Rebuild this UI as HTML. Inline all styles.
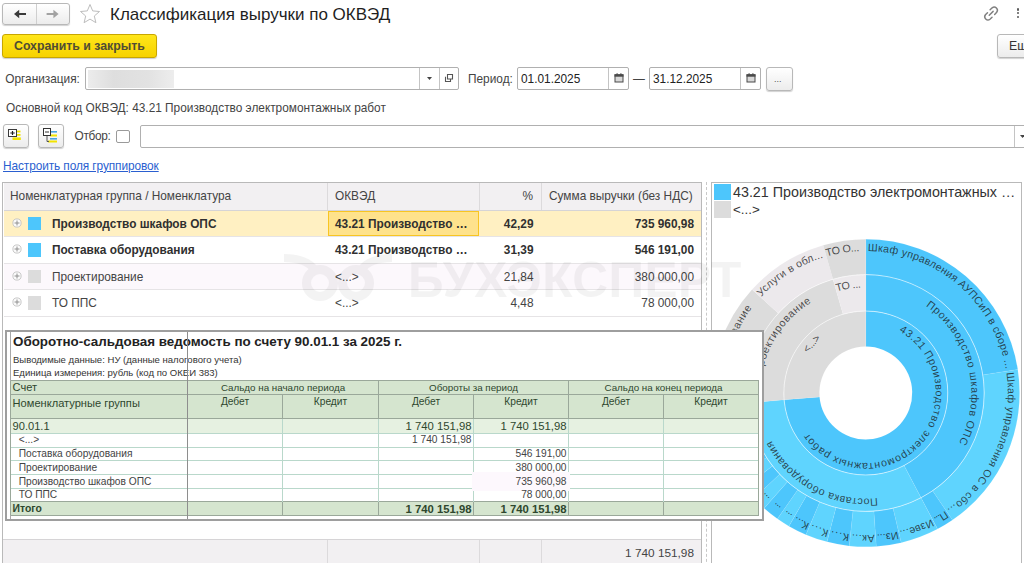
<!DOCTYPE html>
<html lang="ru"><head><meta charset="utf-8"><title>Классификация выручки по ОКВЭД</title>
<style>
html,body{margin:0;padding:0;background:#fff;}
body{width:1024px;height:563px;position:relative;overflow:hidden;font-family:"Liberation Sans",sans-serif;font-size:11.85px;color:#444;}
.a{position:absolute;white-space:nowrap;line-height:1;}
.box{position:absolute;box-sizing:border-box;}
.btn{border:1px solid #b8b8b8;border-radius:3px;background:linear-gradient(#ffffff,#ececec);box-shadow:0 1px 1px rgba(0,0,0,.18);}
.inp{border:1px solid #b0b0b0;border-radius:2px;background:#fff;}
.vl{position:absolute;width:1px;background:#c4c4c4;}
.hl{position:absolute;height:1px;background:#e6e4e6;}
.b{font-weight:bold;color:#303030;}
.r{text-align:right;}
/* overlay */
.ov{position:absolute;left:5px;top:330px;width:759px;height:190px;box-sizing:border-box;border:2px solid #9c9c9c;background:#fff;box-shadow:0 0 0 1px #d0d0d0;}
.g{position:absolute;box-sizing:border-box;}
.osv{color:#2e472e;}
</style></head><body>

<!-- top nav -->
<div class="box btn" style="left:2px;top:3px;width:68px;height:22px;"></div>
<div class="vl" style="left:36px;top:4px;height:20px;background:#cfcfcf"></div>
<svg class="a" style="left:8px;top:7px" width="56" height="14" viewBox="0 0 56 14">
 <path d="M6 7l5.2-4.3v3.2H18v2.2h-6.8v3.2z" fill="#3a3a3a"/>
 <path d="M50.6 7l-5.2-4.3v3.2H38.6v2.2h6.8v3.2z" fill="#a2a2a2"/>
</svg>
<svg class="a" style="left:79px;top:3px" width="22" height="21" viewBox="0 0 22 21"><path d="M11 1.5l2.7 6.4 6.8.6-5.2 4.5 1.6 6.7L11 16.1l-5.9 3.6 1.6-6.7L1.5 8.5l6.8-.6z" fill="#fff" stroke="#bdbdbd" stroke-width="1"/></svg>
<div class="a" style="left:110px;top:5.6px;font-size:17px;color:#1f1f1f;">Классификация выручки по ОКВЭД</div>

<!-- link + dots -->
<svg class="a" style="left:980.6px;top:3.6px" width="19.5" height="19.5" viewBox="0 0 18 18"><g fill="none" stroke="#808080" stroke-width="1.35" stroke-linecap="round"><path d="M7.6 10.4l3.6-3.6"/><path d="M8.4 5.4l1.9-1.9a3 3 0 0 1 4.2 4.2l-1.9 1.9"/><path d="M10.2 12.2l-1.9 1.9a3 3 0 0 1-4.2-4.2L6 8"/></g></svg>
<div class="box" style="left:1016.8px;top:8.3px;width:2.3px;height:2.3px;border-radius:1px;background:#5a5a5a"></div>
<div class="box" style="left:1016.8px;top:12.1px;width:2.3px;height:2.3px;border-radius:1px;background:#5a5a5a"></div>
<div class="box" style="left:1016.8px;top:15.9px;width:2.3px;height:2.3px;border-radius:1px;background:#5a5a5a"></div>

<!-- yellow button -->
<div class="box" style="left:2px;top:34px;width:155px;height:24px;border:1px solid #c8a600;border-radius:3px;background:linear-gradient(#ffe61a,#f7d200);box-shadow:0 1px 1px rgba(0,0,0,.2);"></div>
<div class="a b" style="left:14px;top:40px;font-size:12.3px;color:#504c34;">Сохранить и закрыть</div>
<div class="box btn" style="left:997px;top:34px;width:40px;height:24px;"></div>
<div class="a" style="left:1009px;top:40px;font-size:12.3px;color:#333;">Еще</div>

<!-- org row -->
<div class="a" style="left:5.2px;top:73.8px;">Организация:</div>
<div class="box inp" style="left:84.5px;top:67px;width:374.5px;height:22.6px;"></div>
<div class="box" style="left:87.5px;top:70.2px;width:86px;height:17.5px;background:linear-gradient(90deg,#ececec,#dedede 30%,#e2e2e2 70%,#ededed);"></div>
<div class="vl" style="left:419px;top:68px;height:20.6px;"></div>
<div class="vl" style="left:439px;top:68px;height:20.6px;"></div>
<svg class="a" style="left:426.5px;top:76.5px" width="6" height="4"><path d="M0 0h5L2.5 3z" fill="#444"/></svg>
<svg class="a" style="left:443.5px;top:73px" width="10" height="10" viewBox="0 0 10 10"><path d="M3.5 1.5h5v4.5h-5zM1.5 3.8v4.7h5V6" fill="none" stroke="#555" stroke-width="1.1"/></svg>
<div class="a" style="left:468px;top:73.8px;">Период:</div>
<div class="box inp" style="left:517px;top:67px;width:112px;height:22.6px;"></div>
<div class="vl" style="left:608px;top:68px;height:20.6px;"></div>
<div class="a" style="left:521px;top:73.8px;color:#222;">01.01.2025</div>
<svg class="a cal" style="left:613.5px;top:73px" width="10" height="10" viewBox="0 0 10 10"><rect x="1" y="1.8" width="8" height="7.2" fill="#d8d8d8" stroke="#4a4a4a" stroke-width="1"/><rect x="0.5" y="1.3" width="9" height="2.4" fill="#4a4a4a"/><rect x="2.5" y="0.3" width="1.2" height="1.5" fill="#4a4a4a"/><rect x="6.3" y="0.3" width="1.2" height="1.5" fill="#4a4a4a"/></svg>
<div class="a" style="left:633px;top:73.8px;">—</div>
<div class="box inp" style="left:649px;top:67px;width:112px;height:22.6px;"></div>
<div class="vl" style="left:740px;top:68px;height:20.6px;"></div>
<div class="a" style="left:653px;top:73.8px;color:#222;">31.12.2025</div>
<svg class="a cal" style="left:745.5px;top:73px" width="10" height="10" viewBox="0 0 10 10"><rect x="1" y="1.8" width="8" height="7.2" fill="#d8d8d8" stroke="#4a4a4a" stroke-width="1"/><rect x="0.5" y="1.3" width="9" height="2.4" fill="#4a4a4a"/><rect x="2.5" y="0.3" width="1.2" height="1.5" fill="#4a4a4a"/><rect x="6.3" y="0.3" width="1.2" height="1.5" fill="#4a4a4a"/></svg>
<div class="box btn" style="left:766px;top:66.5px;width:27px;height:24.3px;"></div>
<div class="a" style="left:774px;top:75px;font-size:9px;color:#555;">...</div>

<div class="a" style="left:6px;top:103px;">Основной код ОКВЭД: 43.21 Производство электромонтажных работ</div>

<!-- toolbar -->
<div class="box btn" style="left:2.5px;top:124px;width:26.5px;height:24px;"></div>
<svg class="a" style="left:8px;top:129px" width="14" height="13" viewBox="0 0 14 13"><rect x="4.5" y="1.6" width="8" height="1.8" fill="#f2e400"/><rect x="4.5" y="5" width="8" height="1.8" fill="#f2e400"/><rect x="4.5" y="8.4" width="8.3" height="2.6" fill="#f2e400"/><rect x="0.5" y="0.5" width="8" height="7" fill="#fff" stroke="#3a3a3a" stroke-width="1"/><path d="M2.3 4h4.4M4.5 2v4" stroke="#222" stroke-width="1.2"/></svg>
<div class="box btn" style="left:37.8px;top:124px;width:26.6px;height:24px;"></div>
<svg class="a" style="left:43px;top:128px" width="16" height="16" viewBox="0 0 16 16"><rect x="7" y="3" width="7" height="1.6" fill="#4aa3e0"/><rect x="7" y="6.5" width="7" height="2" fill="#f2e400"/><rect x="7" y="10" width="7" height="1.6" fill="#4aa3e0"/><rect x="5" y="12.5" width="9" height="2" fill="#f2e400"/><rect x="0.5" y="0.5" width="7" height="7" fill="#fff" stroke="#333" stroke-width="1"/><path d="M2 4h4" stroke="#333" stroke-width="1"/><path d="M4 8v5.5h2" stroke="#555" stroke-width="1" fill="none"/></svg>
<div class="a" style="left:74.5px;top:131px;letter-spacing:-0.3px;">Отбор:</div>
<div class="box" style="left:116.4px;top:130px;width:13.4px;height:13.4px;border:1px solid #9a9a9a;border-radius:2px;background:#fff;"></div>
<div class="box inp" style="left:140px;top:125px;width:900px;height:23px;"></div>
<div class="vl" style="left:1014px;top:126px;height:21px;"></div>
<svg class="a" style="left:1019.5px;top:134.5px" width="6" height="4"><path d="M0 0h5L2.5 3z" fill="#444"/></svg>

<div class="a" style="left:3px;top:160.8px;color:#2a5fd0;letter-spacing:-0.08px;text-decoration:underline;">Настроить поля группировок</div>

<!-- main table -->
<div class="box" style="left:2px;top:182px;width:700px;height:400px;border:1px solid #b9b9b9;background:#fff;"></div>
<div class="box" style="left:3.5px;top:183px;width:697.5px;height:27.5px;background:#f2f0f2;"></div>
<div class="box" style="left:3.5px;top:210.6px;width:697.5px;height:25.6px;background:#fff0c2;"></div>
<div class="box" style="left:4px;top:263px;width:697px;height:26px;background:#fcf8fc;"></div>
<div class="hl" style="left:3.5px;top:209.7px;width:697.5px;background:#d6d4d6"></div>
<div class="hl" style="left:4px;top:236px;width:697px;"></div>
<div class="hl" style="left:4px;top:263px;width:697px;"></div>
<div class="hl" style="left:4px;top:289px;width:697px;"></div>
<div class="hl" style="left:4px;top:316px;width:697px;"></div>
<div class="vl" style="left:327px;top:183px;height:27px;background:#dcdadc"></div>
<div class="vl" style="left:479px;top:183px;height:27px;background:#dcdadc"></div>
<div class="vl" style="left:541px;top:183px;height:27px;background:#dcdadc"></div>
<div class="a" style="left:10px;top:190.8px;">Номенклатурная группа / Номенклатура</div>
<div class="a" style="left:335px;top:190.8px;">ОКВЭД</div>
<div class="a r" style="left:490px;top:190.8px;width:43px;">%</div>
<div class="a" style="left:549px;top:190.8px;">Сумма выручки (без НДС)</div>

<!-- rows -->
<div class="box" style="left:328px;top:211.2px;width:150.6px;height:24.4px;border:1.5px solid #f8c522;background:#fee28c;"></div>
<svg class="a" style="left:12px;top:218px" width="10" height="10" viewBox="0 0 10 10"><circle cx="5" cy="5" r="4.1" fill="#fbfbfb" stroke="#c2c2c2" stroke-width="0.9"/><path d="M2.5 5h5M5 2.5v5" stroke="#909090" stroke-width="1"/></svg>
<div class="box" style="left:28px;top:216.5px;width:13.4px;height:13.7px;background:#4dc6fc;"></div>
<div class="a b" style="left:52px;top:218.8px;">Производство шкафов ОПС</div>
<div class="a b" style="left:335px;top:218.8px;">43.21 Производство …</div>
<div class="a b r" style="left:480px;top:218.8px;width:53.5px;">42,29</div>
<div class="a b r" style="left:560px;top:218.8px;width:134px;">735 960,98</div>
<svg class="a" style="left:12px;top:244px" width="10" height="10" viewBox="0 0 10 10"><circle cx="5" cy="5" r="4.1" fill="#fbfbfb" stroke="#c2c2c2" stroke-width="0.9"/><path d="M2.5 5h5M5 2.5v5" stroke="#909090" stroke-width="1"/></svg>
<div class="box" style="left:28px;top:243.0px;width:13.4px;height:13.7px;background:#4dc6fc;"></div>
<div class="a b" style="left:52px;top:245.3px;">Поставка оборудования</div>
<div class="a b" style="left:335px;top:245.3px;">43.21 Производство …</div>
<div class="a b r" style="left:480px;top:245.3px;width:53.5px;">31,39</div>
<div class="a b r" style="left:560px;top:245.3px;width:134px;">546 191,00</div>
<svg class="a" style="left:12px;top:271px" width="10" height="10" viewBox="0 0 10 10"><circle cx="5" cy="5" r="4.1" fill="#fbfbfb" stroke="#c2c2c2" stroke-width="0.9"/><path d="M2.5 5h5M5 2.5v5" stroke="#909090" stroke-width="1"/></svg>
<div class="box" style="left:28px;top:269.5px;width:13.4px;height:13.7px;background:#dcdcdc;"></div>
<div class="a" style="left:52px;top:271.8px;">Проектирование</div>
<div class="a" style="left:335px;top:271.8px;">&lt;...&gt;</div>
<div class="a r" style="left:480px;top:271.8px;width:53.5px;">21,84</div>
<div class="a r" style="left:560px;top:271.8px;width:134px;">380 000,00</div>
<svg class="a" style="left:12px;top:297px" width="10" height="10" viewBox="0 0 10 10"><circle cx="5" cy="5" r="4.1" fill="#fbfbfb" stroke="#c2c2c2" stroke-width="0.9"/><path d="M2.5 5h5M5 2.5v5" stroke="#909090" stroke-width="1"/></svg>
<div class="box" style="left:28px;top:296.0px;width:13.4px;height:13.7px;background:#dcdcdc;"></div>
<div class="a" style="left:52px;top:298.3px;">ТО ППС</div>
<div class="a" style="left:335px;top:298.3px;">&lt;...&gt;</div>
<div class="a r" style="left:480px;top:298.3px;width:53.5px;">4,48</div>
<div class="a r" style="left:560px;top:298.3px;width:134px;">78 000,00</div>

<!-- footer -->
<div class="box" style="left:3px;top:539px;width:698px;height:30px;background:#f2f0f2;border-top:1px solid #d6d4d6;"></div>
<div class="vl" style="left:327px;top:540px;height:30px;background:#dcdadc"></div>
<div class="vl" style="left:479px;top:540px;height:30px;background:#dcdadc"></div>
<div class="vl" style="left:541px;top:540px;height:30px;background:#dcdadc"></div>
<div class="a r" style="left:560px;top:547.5px;width:134px;font-size:11.8px;">1 740 151,98</div>

<!-- splitter + chart panel -->
<div class="box" style="left:706px;top:182px;width:0;height:400px;border-left:1px dashed #c8c8c8;"></div>
<div class="box" style="left:711px;top:181.5px;width:310.5px;height:400px;border:1px solid #b9b9b9;background:#fff;"></div>
<div class="box" style="left:714px;top:184px;width:17px;height:16px;background:#4dc6fc;"></div>
<div class="box" style="left:714px;top:201px;width:17px;height:17px;background:#dcdcdc;"></div>
<div class="a" style="left:733px;top:185px;font-size:14.3px;color:#333;">43.21 Производство электромонтажных …</div>
<div class="a" style="left:733px;top:202.5px;font-size:13.4px;color:#333;">&lt;...&gt;</div>
<svg class="chart" width="1024" height="563" viewBox="0 0 1024 563" style="position:absolute;left:0;top:0" font-family="Liberation Sans, sans-serif"><defs><path id="p1" d="M896.92 330.30A70.0 70.0 0 1 1 796.08 399.22"/><path id="p2" d="M806.83 355.29A70.0 70.0 0 0 1 854.01 324.00"/><path id="p3" d="M922.69 304.04A105.6 105.6 0 0 1 921.45 482.75"/><path id="p4" d="M881.23 497.47A105.6 105.6 0 0 1 760.35 387.29"/><path id="p5" d="M761.28 377.94A105.6 105.6 0 0 1 863.59 287.42"/><path id="p6" d="M833.34 292.51A105.6 105.6 0 0 1 914.40 299.25"/><path id="p7" d="M862.83 251.03A142.0 142.0 0 0 1 998.98 442.26"/><path id="p8" d="M1005.56 367.85A142.0 142.0 0 0 1 878.18 534.46"/><path id="p9" d="M949.27 507.88A142.0 142.0 0 0 1 861.84 534.94"/><path id="p10" d="M935.72 516.59A142.0 142.0 0 0 1 825.95 529.29"/><path id="p11" d="M902.55 530.16A142.0 142.0 0 0 1 804.44 521.06"/><path id="p12" d="M879.41 534.35A142.0 142.0 0 0 1 783.14 508.46"/><path id="p13" d="M854.41 534.54A142.0 142.0 0 0 1 767.16 495.15"/><path id="p14" d="M833.86 531.36A142.0 142.0 0 0 1 753.29 479.64"/><path id="p15" d="M814.22 525.30A142.0 142.0 0 0 1 743.45 465.07"/><path id="p16" d="M796.96 517.20A142.0 142.0 0 0 1 737.95 454.80"/><path id="p17" d="M785.37 510.03A142.0 142.0 0 0 1 732.62 442.26"/><path id="p18" d="M773.77 501.14A142.0 142.0 0 0 1 728.26 428.31"/><path id="p19" d="M723.83 395.97A142.0 142.0 0 0 1 809.63 262.58"/><path id="p20" d="M757.98 300.59A142.0 142.0 0 0 1 896.78 254.42"/><path id="p21" d="M822.16 257.87A142.0 142.0 0 0 1 931.15 266.93"/></defs><path d="M865.80 311.00A82.0 82.0 0 1 1 784.09 399.86L819.56 396.88A46.4 46.4 0 1 0 865.80 346.60Z" fill="#4dc6fc" stroke="rgba(255,255,255,0.12)" stroke-width="0.6"/><path d="M784.09 399.86A82.0 82.0 0 0 1 865.80 311.00L865.80 346.60A46.4 46.4 0 0 0 819.56 396.88Z" fill="#dcdcdc" stroke="rgba(255,255,255,0.12)" stroke-width="0.6"/><path d="M865.80 274.60A118.4 118.4 0 0 1 921.02 497.73L904.04 465.54A82.0 82.0 0 0 0 865.80 311.00Z" fill="#4dc6fc" stroke="rgba(255,255,255,0.12)" stroke-width="0.6"/><path d="M921.02 497.73A118.4 118.4 0 0 1 747.82 402.91L784.09 399.86A82.0 82.0 0 0 0 904.04 465.54Z" fill="#5fd4fe" stroke="rgba(255,255,255,0.12)" stroke-width="0.6"/><path d="M747.82 402.91A118.4 118.4 0 0 1 832.97 279.24L843.06 314.22A82.0 82.0 0 0 0 784.09 399.86Z" fill="#dcdcdc" stroke="rgba(255,255,255,0.12)" stroke-width="0.6"/><path d="M832.97 279.24A118.4 118.4 0 0 1 865.80 274.60L865.80 311.00A82.0 82.0 0 0 0 843.06 314.22Z" fill="#ece9ec" stroke="rgba(255,255,255,0.12)" stroke-width="0.6"/><path d="M865.80 239.20A153.8 153.8 0 0 1 1017.79 369.47L982.81 374.89A118.4 118.4 0 0 0 865.80 274.60Z" fill="#4dc6fc" stroke="rgba(255,255,255,0.12)" stroke-width="0.6"/><path d="M1017.79 369.47A153.8 153.8 0 0 1 952.47 520.05L932.52 490.81A118.4 118.4 0 0 0 982.81 374.89Z" fill="#5fd4fe" stroke="rgba(255,255,255,0.12)" stroke-width="0.6"/><path d="M952.47 520.05A153.8 153.8 0 0 1 937.53 529.05L921.02 497.73A118.4 118.4 0 0 0 932.52 490.81Z" fill="#4dc6fc" stroke="rgba(255,255,255,0.12)" stroke-width="0.6"/><path d="M937.53 529.05A153.8 153.8 0 0 1 901.18 542.67L893.04 508.22A118.4 118.4 0 0 0 921.02 497.73Z" fill="#5fd4fe" stroke="rgba(255,255,255,0.12)" stroke-width="0.6"/><path d="M901.18 542.67A153.8 153.8 0 0 1 876.26 546.44L873.85 511.13A118.4 118.4 0 0 0 893.04 508.22Z" fill="#4dc6fc" stroke="rgba(255,255,255,0.12)" stroke-width="0.6"/><path d="M876.26 546.44A153.8 153.8 0 0 1 849.19 545.90L853.01 510.71A118.4 118.4 0 0 0 873.85 511.13Z" fill="#5fd4fe" stroke="rgba(255,255,255,0.12)" stroke-width="0.6"/><path d="M849.19 545.90A153.8 153.8 0 0 1 827.03 541.83L835.95 507.58A118.4 118.4 0 0 0 853.01 510.71Z" fill="#4dc6fc" stroke="rgba(255,255,255,0.12)" stroke-width="0.6"/><path d="M827.03 541.83A153.8 153.8 0 0 1 805.95 534.68L819.73 502.07A118.4 118.4 0 0 0 835.95 507.58Z" fill="#5fd4fe" stroke="rgba(255,255,255,0.12)" stroke-width="0.6"/><path d="M805.95 534.68A153.8 153.8 0 0 1 788.90 526.19L806.60 495.54A118.4 118.4 0 0 0 819.73 502.07Z" fill="#4dc6fc" stroke="rgba(255,255,255,0.12)" stroke-width="0.6"/><path d="M788.90 526.19A153.8 153.8 0 0 1 777.36 518.83L797.72 489.87A118.4 118.4 0 0 0 806.60 495.54Z" fill="#5fd4fe" stroke="rgba(255,255,255,0.12)" stroke-width="0.6"/><path d="M777.36 518.83A153.8 153.8 0 0 1 764.09 508.37L787.50 481.81A118.4 118.4 0 0 0 797.72 489.87Z" fill="#4dc6fc" stroke="rgba(255,255,255,0.12)" stroke-width="0.6"/><path d="M764.09 508.37A153.8 153.8 0 0 1 753.87 498.48L779.63 474.20A118.4 118.4 0 0 0 787.50 481.81Z" fill="#5fd4fe" stroke="rgba(255,255,255,0.12)" stroke-width="0.6"/><path d="M753.87 498.48A153.8 153.8 0 0 1 744.60 487.69L772.50 465.89A118.4 118.4 0 0 0 779.63 474.20Z" fill="#4dc6fc" stroke="rgba(255,255,255,0.12)" stroke-width="0.6"/><path d="M744.60 487.69A153.8 153.8 0 0 1 736.81 476.77L766.50 457.49A118.4 118.4 0 0 0 772.50 465.89Z" fill="#5fd4fe" stroke="rgba(255,255,255,0.12)" stroke-width="0.6"/><path d="M736.81 476.77A153.8 153.8 0 0 1 730.00 465.20L761.26 448.59A118.4 118.4 0 0 0 766.50 457.49Z" fill="#4dc6fc" stroke="rgba(255,255,255,0.12)" stroke-width="0.6"/><path d="M730.00 465.20A153.8 153.8 0 0 1 724.23 453.09L756.81 439.26A118.4 118.4 0 0 0 761.26 448.59Z" fill="#5fd4fe" stroke="rgba(255,255,255,0.12)" stroke-width="0.6"/><path d="M724.23 453.09A153.8 153.8 0 0 1 719.53 440.53L753.19 429.59A118.4 118.4 0 0 0 756.81 439.26Z" fill="#4dc6fc" stroke="rgba(255,255,255,0.12)" stroke-width="0.6"/><path d="M719.53 440.53A153.8 153.8 0 0 1 715.94 427.60L750.43 419.63A118.4 118.4 0 0 0 753.19 429.59Z" fill="#5fd4fe" stroke="rgba(255,255,255,0.12)" stroke-width="0.6"/><path d="M715.94 427.60A153.8 153.8 0 0 1 713.89 417.06L748.86 411.52A118.4 118.4 0 0 0 750.43 419.63Z" fill="#4dc6fc" stroke="rgba(255,255,255,0.12)" stroke-width="0.6"/><path d="M713.89 417.06A153.8 153.8 0 0 1 712.54 405.87L747.82 402.91A118.4 118.4 0 0 0 748.86 411.52Z" fill="#5fd4fe" stroke="rgba(255,255,255,0.12)" stroke-width="0.6"/><path d="M712.54 405.87A153.8 153.8 0 0 1 752.04 289.49L778.23 313.32A118.4 118.4 0 0 0 747.82 402.91Z" fill="#dcdcdc" stroke="rgba(255,255,255,0.12)" stroke-width="0.6"/><path d="M752.04 289.49A153.8 153.8 0 0 1 823.15 245.23L832.97 279.24A118.4 118.4 0 0 0 778.23 313.32Z" fill="#ece9ec" stroke="rgba(255,255,255,0.12)" stroke-width="0.6"/><path d="M823.15 245.23A153.8 153.8 0 0 1 865.80 239.20L865.80 274.60A118.4 118.4 0 0 0 832.97 279.24Z" fill="#dcdcdc" stroke="rgba(255,255,255,0.12)" stroke-width="0.6"/><circle cx="865.8" cy="393.0" r="82.0" fill="none" stroke="rgba(255,255,255,0.55)" stroke-width="0.9"/><circle cx="865.8" cy="393.0" r="118.4" fill="none" stroke="rgba(255,255,255,0.55)" stroke-width="0.9"/><text font-size="10.7" letter-spacing="0.577" fill="#1a1a1a" fill-opacity="0.78"><textPath href="#p1" startOffset="2.44">43.21 Производство электромонтажных работ</textPath></text><text font-size="10.7" letter-spacing="-0.558" fill="#1a1a1a" fill-opacity="0.78"><textPath href="#p2" startOffset="2.44">&lt;...&gt;</textPath></text><text font-size="10.7" letter-spacing="0.670" fill="#1a1a1a" fill-opacity="0.78"><textPath href="#p3" startOffset="3.69">Производство шкафов ОПС</textPath></text><text font-size="10.7" letter-spacing="0.430" fill="#1a1a1a" fill-opacity="0.78"><textPath href="#p4" startOffset="3.69">Поставка оборудования</textPath></text><text font-size="10.7" letter-spacing="0.546" fill="#1a1a1a" fill-opacity="0.78"><textPath href="#p5" startOffset="3.69">Проектирование</textPath></text><text font-size="10.7" letter-spacing="-0.351" fill="#1a1a1a" fill-opacity="0.78"><textPath href="#p6" startOffset="3.69">ТО ...</textPath></text><text font-size="10.7" letter-spacing="0.238" fill="#1a1a1a" fill-opacity="0.78"><textPath href="#p7" startOffset="4.96">Шкаф управления АУПСиП в сборе ...</textPath></text><text font-size="10.7" letter-spacing="0.339" fill="#1a1a1a" fill-opacity="0.78"><textPath href="#p8" startOffset="4.96">Шкаф управления ОС в сбо...</textPath></text><text font-size="10.7" letter-spacing="-0.910" fill="#1a1a1a" fill-opacity="0.78"><textPath href="#p9" startOffset="4.96">П...</textPath></text><text font-size="10.7" letter-spacing="0.195" fill="#1a1a1a" fill-opacity="0.78"><textPath href="#p10" startOffset="4.96">Изве...</textPath></text><text font-size="10.7" letter-spacing="-0.050" fill="#1a1a1a" fill-opacity="0.78"><textPath href="#p11" startOffset="4.96">Из...</textPath></text><text font-size="10.7" letter-spacing="0.454" fill="#1a1a1a" fill-opacity="0.78"><textPath href="#p12" startOffset="4.96">Ак...</textPath></text><text font-size="10.7" letter-spacing="1.063" fill="#1a1a1a" fill-opacity="0.78"><textPath href="#p13" startOffset="4.96">К...</textPath></text><text font-size="10.7" letter-spacing="1.063" fill="#1a1a1a" fill-opacity="0.78"><textPath href="#p14" startOffset="4.96">К...</textPath></text><text font-size="10.7" letter-spacing="0.072" fill="#1a1a1a" fill-opacity="0.78"><textPath href="#p15" startOffset="4.96">К...</textPath></text><text font-size="10.7" letter-spacing="-0.494" fill="#1a1a1a" fill-opacity="0.78"><textPath href="#p16" startOffset="4.96">...</textPath></text><text font-size="10.7" letter-spacing="-0.494" fill="#1a1a1a" fill-opacity="0.78"><textPath href="#p17" startOffset="4.96">...</textPath></text><text font-size="10.7" letter-spacing="-0.494" fill="#1a1a1a" fill-opacity="0.78"><textPath href="#p18" startOffset="4.96">...</textPath></text><text font-size="10.7" letter-spacing="0.500" fill="#1a1a1a" fill-opacity="0.78"><textPath href="#p19" startOffset="4.96">Проектирование</textPath></text><text font-size="10.7" letter-spacing="0.218" fill="#1a1a1a" fill-opacity="0.78"><textPath href="#p20" startOffset="4.96">Услуги в обл...</textPath></text><text font-size="10.7" letter-spacing="-0.271" fill="#1a1a1a" fill-opacity="0.78"><textPath href="#p21" startOffset="4.96">ТО О...</textPath></text></svg>
<!-- watermark -->
<div class="a" style="left:408px;top:254.7px;font-size:49.5px;font-weight:bold;color:#000;opacity:0.045;letter-spacing:0.5px;">БУХЭКСПЕРТ</div>
<svg class="a" style="left:280px;top:250px;opacity:0.045" width="116" height="56" viewBox="0 0 116 56"><g fill="none" stroke="#000" stroke-width="9"><circle cx="40" cy="33" r="13.5"/><circle cx="76" cy="33" r="13.5"/></g><path d="M4 8c14 0 25 4 31 12" stroke="#000" stroke-width="8" fill="none"/><path d="M112 8c-14 0-25 4-31 12" stroke="#000" stroke-width="8" fill="none"/></svg>


<!-- overlay -->
<div class="box" style="left:5px;top:330px;width:759px;height:191px;background:#fff;border:2px solid #9e9e9e;"></div>
<div class="box" style="left:9.5px;top:332px;width:1px;height:187px;background:#a8a8a8;"></div>
<div class="a b" style="left:13px;top:335px;font-size:13.4px;color:#222;">Оборотно-сальдовая ведомость по счету 90.01.1 за 2025 г.</div>
<div class="a" style="left:13px;top:354.5px;font-size:9.55px;color:#333;">Выводимые данные: НУ (данные налогового учета)</div>
<div class="a" style="left:13px;top:367.5px;font-size:9.55px;color:#333;">Единица измерения: рубль (код по ОКЕИ 383)</div>
<div class="box" style="left:10.5px;top:380.5px;width:748.0px;height:38.0px;background:#d5e5cf;"></div>
<div class="box" style="left:10.5px;top:418.5px;width:748.0px;height:14.5px;background:#e6f1e1;"></div>
<div class="box" style="left:10.5px;top:501.5px;width:748.0px;height:13.8px;background:#d5e5cf;"></div>
<div class="box" style="left:10.5px;top:380.0px;width:748.0px;height:1px;background:#9aa89a;"></div>
<div class="box" style="left:10.5px;top:394.0px;width:748.0px;height:1px;background:#9aa89a;"></div>
<div class="box" style="left:10.5px;top:418.0px;width:748.0px;height:1px;background:#9aa89a;"></div>
<div class="box" style="left:10.5px;top:432.5px;width:748.0px;height:1px;background:#b9d8cb;"></div>
<div class="box" style="left:10.5px;top:446.5px;width:748.0px;height:1px;background:#b9d8cb;"></div>
<div class="box" style="left:10.5px;top:460.2px;width:748.0px;height:1px;background:#b9d8cb;"></div>
<div class="box" style="left:10.5px;top:474.0px;width:748.0px;height:1px;background:#b9d8cb;"></div>
<div class="box" style="left:10.5px;top:487.8px;width:748.0px;height:1px;background:#b9d8cb;"></div>
<div class="box" style="left:10.5px;top:501.0px;width:748.0px;height:1px;background:#9aa89a;"></div>
<div class="box" style="left:10.5px;top:514.8px;width:748.0px;height:1px;background:#9aa89a;"></div>
<div class="box" style="left:10.0px;top:380.5px;width:1px;height:134.8px;background:#9aa89a;"></div>
<div class="box" style="left:187.0px;top:380.5px;width:1px;height:38.0px;background:#9aa89a;"></div>
<div class="box" style="left:187.0px;top:418.5px;width:1px;height:83.0px;background:#b9d8cb;"></div>
<div class="box" style="left:187.0px;top:501.5px;width:1px;height:13.8px;background:#9aa89a;"></div>
<div class="box" style="left:282.0px;top:394.5px;width:1px;height:24.0px;background:#9aa89a;"></div>
<div class="box" style="left:282.0px;top:418.5px;width:1px;height:83.0px;background:#b9d8cb;"></div>
<div class="box" style="left:282.0px;top:501.5px;width:1px;height:13.8px;background:#9aa89a;"></div>
<div class="box" style="left:378.0px;top:380.5px;width:1px;height:38.0px;background:#9aa89a;"></div>
<div class="box" style="left:378.0px;top:418.5px;width:1px;height:83.0px;background:#b9d8cb;"></div>
<div class="box" style="left:378.0px;top:501.5px;width:1px;height:13.8px;background:#9aa89a;"></div>
<div class="box" style="left:473.0px;top:394.5px;width:1px;height:24.0px;background:#9aa89a;"></div>
<div class="box" style="left:473.0px;top:418.5px;width:1px;height:83.0px;background:#b9d8cb;"></div>
<div class="box" style="left:473.0px;top:501.5px;width:1px;height:13.8px;background:#9aa89a;"></div>
<div class="box" style="left:568.0px;top:380.5px;width:1px;height:38.0px;background:#9aa89a;"></div>
<div class="box" style="left:568.0px;top:418.5px;width:1px;height:83.0px;background:#b9d8cb;"></div>
<div class="box" style="left:568.0px;top:501.5px;width:1px;height:13.8px;background:#9aa89a;"></div>
<div class="box" style="left:663.0px;top:394.5px;width:1px;height:24.0px;background:#9aa89a;"></div>
<div class="box" style="left:663.0px;top:418.5px;width:1px;height:83.0px;background:#b9d8cb;"></div>
<div class="box" style="left:663.0px;top:501.5px;width:1px;height:13.8px;background:#9aa89a;"></div>
<div class="box" style="left:758.0px;top:380.5px;width:1px;height:134.8px;background:#9aa89a;"></div>
<div class="box" style="left:471.5px;top:472px;width:98px;height:18.5px;background:#fdf8fd;"></div>
<div class="box" style="left:187px;top:332px;width:1px;height:187px;background:#8e8e8e;"></div>
<div class="a osv" style="left:12.6px;top:382px;font-size:11.1px;">Счет</div>
<div class="a osv" style="left:12.6px;top:397.7px;font-size:11.1px;">Номенклатурные группы</div>
<div class="a osv" style="left:12.6px;top:420.5px;font-size:11.1px;">90.01.1</div>
<div class="a osv" style="left:187.5px;top:383.2px;font-size:9.8px;width:191.0px;text-align:center;">Сальдо на начало периода</div>
<div class="a osv" style="left:378.5px;top:383.2px;font-size:9.8px;width:190.0px;text-align:center;">Обороты за период</div>
<div class="a osv" style="left:568.5px;top:383.2px;font-size:9.8px;width:190.0px;text-align:center;">Сальдо на конец периода</div>
<div class="a osv" style="left:187.5px;top:397px;font-size:10.2px;width:95.0px;text-align:center;">Дебет</div>
<div class="a osv" style="left:282.5px;top:397px;font-size:10.2px;width:96.0px;text-align:center;">Кредит</div>
<div class="a osv" style="left:378.5px;top:397px;font-size:10.2px;width:95.0px;text-align:center;">Дебет</div>
<div class="a osv" style="left:473.5px;top:397px;font-size:10.2px;width:95.0px;text-align:center;">Кредит</div>
<div class="a osv" style="left:568.5px;top:397px;font-size:10.2px;width:95.0px;text-align:center;">Дебет</div>
<div class="a osv" style="left:663.5px;top:397px;font-size:10.2px;width:95.0px;text-align:center;">Кредит</div>
<div class="a osv" style="left:371.5px;top:420.5px;font-size:11.3px;width:100px;text-align:right;">1 740 151,98</div>
<div class="a osv" style="left:466.5px;top:420.5px;font-size:11.3px;width:100px;text-align:right;">1 740 151,98</div>
<div class="a" style="left:18.7px;top:435.0px;font-size:10.2px;">&lt;...&gt;</div>
<div class="a" style="left:18.7px;top:449.0px;font-size:10.2px;">Поставка оборудования</div>
<div class="a" style="left:18.7px;top:462.7px;font-size:10.2px;">Проектирование</div>
<div class="a" style="left:18.7px;top:476.5px;font-size:10.2px;">Производство шкафов ОПС</div>
<div class="a" style="left:18.7px;top:490.3px;font-size:10.2px;">ТО ППС</div>
<div class="a" style="left:371.5px;top:435.0px;font-size:10.2px;width:100px;text-align:right;">1 740 151,98</div>
<div class="a" style="left:466.5px;top:449.0px;font-size:10.2px;width:100px;text-align:right;">546 191,00</div>
<div class="a" style="left:466.5px;top:462.7px;font-size:10.2px;width:100px;text-align:right;">380 000,00</div>
<div class="a" style="left:466.5px;top:476.5px;font-size:10.2px;width:100px;text-align:right;">735 960,98</div>
<div class="a" style="left:466.5px;top:490.3px;font-size:10.2px;width:100px;text-align:right;">78 000,00</div>
<div class="a b osv" style="left:12.6px;top:503.5px;font-size:10.4px;">Итого</div>
<div class="a b osv" style="left:371.5px;top:503.6px;font-size:11.3px;width:100px;text-align:right;">1 740 151,98</div>
<div class="a b osv" style="left:466.5px;top:503.6px;font-size:11.3px;width:100px;text-align:right;">1 740 151,98</div>

</body></html>
